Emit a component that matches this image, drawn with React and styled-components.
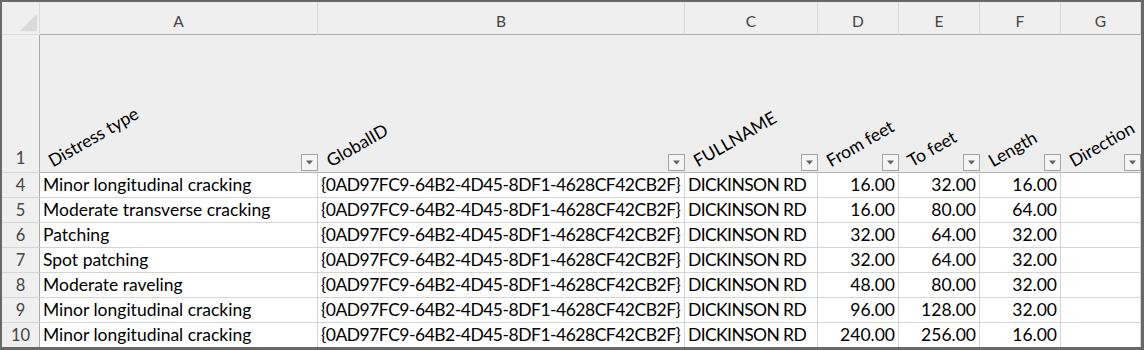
import React from 'react'
import styled, { createGlobalStyle } from 'styled-components'

const GlobalStyle = createGlobalStyle`
    body {
        margin: 0;
        background: #ffffff;
        font-family: Lato, "Open Sans", sans-serif;
    }
`
const Frame = styled.div`
    width: 1144px;
    height: 350px;
    box-sizing: border-box;
    border-style: solid;
    border-color: #686868;
    border-width: 2px 3px 3px 2px;
    overflow: hidden;
`
const Sheet = styled.div`
    display: grid;
    grid-template-columns: 38px 278px 367px 133px 81px 81px 81px 80px;
    grid-template-rows: 33px 138px repeat(7, 25px);
    height: 345px;
    overflow: hidden;
`
const Corner = styled.div`
    box-sizing: border-box;
    background: #efefef;
    border-right: 1px solid #dcdcdc;
    border-bottom: 1px solid #dcdcdc;
    display: flex;
    align-items: flex-end;
    justify-content: flex-end;
    padding: 0 2px 3px 0;
`
const ColLetter = styled.div`
    box-sizing: border-box;
    background: #efefef;
    border-right: 1px solid #d9d9d9;
    border-bottom: 1px solid #ababab;
    display: flex;
    align-items: flex-end;
    justify-content: center;
    padding-bottom: 3px;
    font-size: 15.5px;
    line-height: 1.2;
    color: #444444;
`
const RowNum = styled.div`
    box-sizing: border-box;
    background: #efefef;
    border-right: 1px solid #ababab;
    border-bottom: 1px solid #d6d6d6;
    display: flex;
    align-items: flex-end;
    justify-content: center;
    padding-bottom: ${(p) => (p.tall ? '3px' : '0')};
    font-size: 16.5px;
    line-height: ${(p) => (p.tall ? '1.2' : '24px')};
    color: #444444;
`
const HeadCell = styled.div`
    box-sizing: border-box;
    background: #eeeeee;
    border-bottom: 1px solid #b4b4b4;
    display: flex;
    align-items: flex-end;
    padding-left: 15px;
`
const HeadLabel = styled.span`
    flex: 0 0 0;
    width: 0;
    white-space: nowrap;
    font-size: 17.5px;
    line-height: 1.2;
    color: #000000;
    margin-bottom: 1px;
    transform-origin: left bottom;
    transform: rotate(-30deg);
`
const FilterButton = styled.div`
    box-sizing: border-box;
    width: 17px;
    height: 17px;
    margin-left: auto;
    margin-bottom: 1px;
    border: 1px solid #a3a3a3;
    background: #f5f5f5;
    display: flex;
    align-items: center;
    justify-content: center;
`
const DataCell = styled.div`
    box-sizing: border-box;
    border-right: 1px solid #d4d4d4;
    border-bottom: 1px solid #d4d4d4;
    padding: 0 3px;
    font-size: 17.5px;
    line-height: 24px;
    letter-spacing: ${(p) => p.spacing || 'normal'};
    color: #000000;
    white-space: nowrap;
    overflow: hidden;
    text-align: ${(p) => (p.num ? 'right' : 'left')};
`

const columns = ['A', 'B', 'C', 'D', 'E', 'F', 'G']
const headers = ['Distress type', 'GlobalID', 'FULLNAME', 'From feet', 'To feet', 'Length', 'Direction']
const guid = '{0AD97FC9-64B2-4D45-8DF1-4628CF42CB2F}'

const rows = [
    [4, 'Minor longitudinal cracking', '16.00', '32.00', '16.00'],
    [5, 'Moderate transverse cracking', '16.00', '80.00', '64.00'],
    [6, 'Patching', '32.00', '64.00', '32.00'],
    [7, 'Spot patching', '32.00', '64.00', '32.00'],
    [8, 'Moderate raveling', '48.00', '80.00', '32.00'],
    [9, 'Minor longitudinal cracking', '96.00', '128.00', '32.00'],
    [10, 'Minor longitudinal cracking', '240.00', '256.00', '16.00'],
]

const SelectAll = () => (
    <svg width="17" height="17" viewBox="0 0 17 17">
        <polygon points="17,0 17,17 0,17" fill="#dadada" />
    </svg>
)

const DropArrow = () => (
    <svg width="9" height="5" viewBox="0 0 9 5">
        <polygon points="1,0.5 8,0.5 4.5,4.5" fill="#606060" />
    </svg>
)

const App = () => {
    return (
        <Frame>
            <GlobalStyle />
            <Sheet>
                <Corner>
                    <SelectAll />
                </Corner>
                {columns.map((c) => (
                    <ColLetter key={c}>{c}</ColLetter>
                ))}

                <RowNum tall>1</RowNum>
                {headers.map((h) => (
                    <HeadCell key={h}>
                        <HeadLabel>{h}</HeadLabel>
                        <FilterButton>
                            <DropArrow />
                        </FilterButton>
                    </HeadCell>
                ))}

                {rows.map(([n, distress, from, to, length]) => (
                    <React.Fragment key={n}>
                        <RowNum>{n}</RowNum>
                        <DataCell>{distress}</DataCell>
                        <DataCell spacing="-0.5px">{guid}</DataCell>
                        <DataCell spacing="-0.6px">DICKINSON RD</DataCell>
                        <DataCell num>{from}</DataCell>
                        <DataCell num>{to}</DataCell>
                        <DataCell num>{length}</DataCell>
                        <DataCell />
                    </React.Fragment>
                ))}
            </Sheet>
        </Frame>
    )
}

export default App
